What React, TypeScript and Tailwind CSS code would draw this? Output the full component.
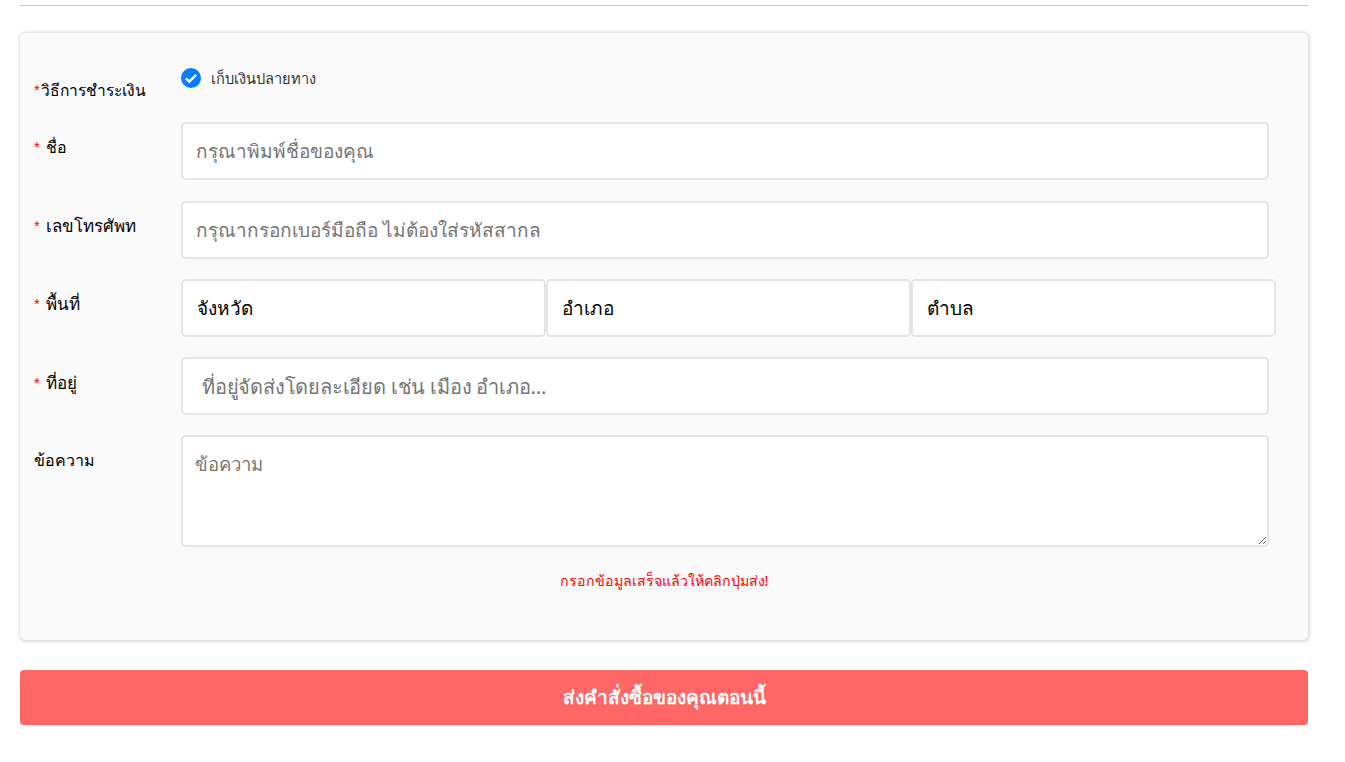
import React from "react";

function Label({ req, tight, text, className = "" }: { req?: boolean; tight?: boolean; text: string; className?: string }) {
  return (
    <div className={`flex w-[147px] shrink-0 leading-[24px] text-black ${className}`}>
      {req && (
        <span className={`shrink-0 font-['Liberation_Sans',sans-serif] text-[15px] leading-[24px] text-[#ff0000] ${tight ? "w-[7px]" : "w-[12px]"}`}>*</span>
      )}
      <span>{text}</span>
    </div>
  );
}

const inputCls =
  "block h-[58px] w-[1088px] rounded-[5px] border-2 border-[#e5e5e5] bg-white text-[19px] text-black outline-none placeholder:text-[#757575]";

export default function App() {
  return (
    <div className="min-h-[762px] bg-white font-['Noto_Sans','Liberation_Sans',sans-serif]">
      <div className="ml-5 w-[1288px] pt-[5px]">
        <div className="h-px bg-[#c4c4c4]" />
        <div className="mt-[27px] h-[607px] rounded-[5px] bg-[#fafafa] pl-[14px] pt-[34px] shadow-[0.5px_0.5px_3px_1.5px_rgba(0,0,0,0.14)]">
          <div className="flex h-[55px]">
            <Label req tight text="วิธีการชำระเงิน" className="pt-[11px] text-[15.6px]" />
            <div className="flex h-[22px] items-center gap-[10px]">
              <svg width="20" height="20" viewBox="0 0 20 20" aria-hidden="true">
                <circle cx="10" cy="10" r="10" fill="#0a7cff" />
                <path d="M4.8 10.4l3.4 3.2 7-6.8" fill="none" stroke="#fff" strokeWidth="2.4" />
              </svg>
              <span className="pt-px text-[14.6px] text-[#333333]">เก็บเงินปลายทาง</span>
            </div>
          </div>

          <div className="flex h-[79px]">
            <Label req text="ชื่อ" className="pt-[13px] text-[16px]" />
            <input className={`${inputCls} px-[13px]`} placeholder="กรุณาพิมพ์ชื่อของคุณ" />
          </div>

          <div className="flex h-[78px]">
            <Label req text="เลขโทรศัพท" className="pt-[13px] text-[16.9px]" />
            <input className={`${inputCls} px-[13px]`} placeholder="กรุณากรอกเบอร์มือถือ ไม่ต้องใส่รหัสสากล" />
          </div>

          <div className="flex h-[78px]">
            <Label req text="พื้นที่" className="pt-[13px] text-[17px]" />
            <div className="flex">
              {["จังหวัด", "อำเภอ", "ตำบล"].map((t) => (
                <div
                  key={t}
                  className="flex h-[58px] w-[365px] shrink-0 items-center rounded-[5px] border-2 border-[#e5e5e5] bg-white px-[14px] text-[19px] text-black"
                >
                  {t}
                </div>
              ))}
            </div>
          </div>

          <div className="flex h-[78px]">
            <Label req text="ที่อยู่" className="pt-[14px] text-[17px]" />
            <input className="block h-[58px] w-[1088px] rounded-[5px] border-2 border-[#e5e5e5] bg-white px-[19px] text-[20px] tracking-[-0.2px] text-black outline-none placeholder:text-[#757575]" placeholder="ที่อยู่จัดส่งโดยละเอียด เช่น เมือง อำเภอ..." />
          </div>

          <div className="flex">
            <Label text="ข้อความ" className="pt-[13px] text-[16px]" />
            <textarea
              className="block h-[112px] w-[1088px] rounded-[5px] border-2 border-[#e5e5e5] bg-white px-[12px] py-[13px] text-[18.5px] text-black outline-none placeholder:text-[#757575]"
              placeholder="ข้อความ"
            />
          </div>

          <p className="mt-[24px] pr-[14px] text-center text-[14.2px] leading-[20px] text-[#ff0000]">
            กรอกข้อมูลเสร็จแล้วให้คลิกปุ่มส่ง!
          </p>
        </div>

        <button className="mt-[30px] block h-[55px] w-[1288px] rounded-[4px] bg-[#ff6666] text-[19px] font-bold text-white">
          ส่งคำสั่งซื้อของคุณตอนนี้
        </button>
      </div>
    </div>
  );
}
